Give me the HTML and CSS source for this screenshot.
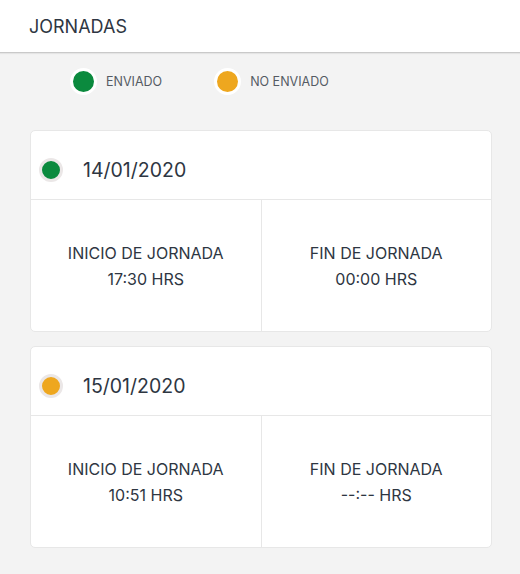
FILE: index.html
```html
<!DOCTYPE html>
<html lang="es">
<head>
  <meta charset="UTF-8">
  <meta name="viewport" content="width=device-width, initial-scale=1.0">
  <title>Jornadas</title>
  <link rel="stylesheet" href="styles.css">
</head>
<body>
  <header class="topbar">
    <h1>JORNADAS</h1>
  </header>
  <div class="legend">
    <div class="legend-item"><span class="legend-dot sent"></span>ENVIADO</div>
    <div class="legend-item"><span class="legend-dot pending"></span>NO ENVIADO</div>
  </div>
  <main class="list">
    <section class="card">
      <div class="card-head">
        <span class="status sent"></span>
        <span class="date">14/01/2020</span>
      </div>
      <div class="card-body">
        <div class="cell">
          <div>INICIO DE JORNADA</div>
          <div>17:30 HRS</div>
        </div>
        <div class="cell">
          <div>FIN DE JORNADA</div>
          <div>00:00 HRS</div>
        </div>
      </div>
    </section>
    <section class="card">
      <div class="card-head">
        <span class="status pending"></span>
        <span class="date">15/01/2020</span>
      </div>
      <div class="card-body">
        <div class="cell">
          <div>INICIO DE JORNADA</div>
          <div>10:51 HRS</div>
        </div>
        <div class="cell">
          <div>FIN DE JORNADA</div>
          <div>--:-- HRS</div>
        </div>
      </div>
    </section>
  </main>
</body>
</html>
```

FILE: styles.css
```css
body {
  margin: 0;
  background: #f3f3f3;
  font-family: Inter, "Noto Sans", sans-serif;
  color: #2e3642;
}
.topbar {
  background: #fff;
  height: 52px;
  border-bottom: 1px solid #c9c9c9;
  box-shadow: 0 1px 1px rgba(0, 0, 0, 0.06);
  display: flex;
  align-items: center;
  padding-left: 29px;
}
.topbar h1 {
  margin: 0;
  font-size: 18px;
  font-weight: 400;
}
.legend {
  display: flex;
  align-items: center;
  height: 57px;
  padding-left: 70px;
  gap: 52px;
}
.legend-item {
  display: flex;
  align-items: center;
  gap: 9px;
  font-size: 12.5px;
  color: #555b63;
}
.legend-dot {
  width: 21px;
  height: 21px;
  border-radius: 50%;
  border: 3px solid #fff;
}
.sent {
  background: #0b8a3e;
}
.pending {
  background: #eea71f;
}
.list {
  padding: 20px 28px 20px 30px;
  display: flex;
  flex-direction: column;
  gap: 14px;
}
.card {
  background: #fff;
  border: 1px solid #e7e7e7;
  border-radius: 5px;
}
.card-head {
  height: 58px;
  padding: 10px 0 0 8px;
  display: flex;
  align-items: center;
  gap: 20px;
  border-bottom: 1px solid #e7e7e7;
}
.status {
  width: 18px;
  height: 18px;
  border-radius: 50%;
  border: 3px solid #ebe7e7;
}
.date {
  font-size: 19.5px;
  font-weight: 400;
}
.card-body {
  display: flex;
  height: 131px;
}
.cell {
  flex: 1;
  display: flex;
  flex-direction: column;
  justify-content: center;
  align-items: center;
  gap: 6px;
  font-size: 16px;
  line-height: 20px;
}
.cell + .cell {
  border-left: 1px solid #e7e7e7;
}
```
